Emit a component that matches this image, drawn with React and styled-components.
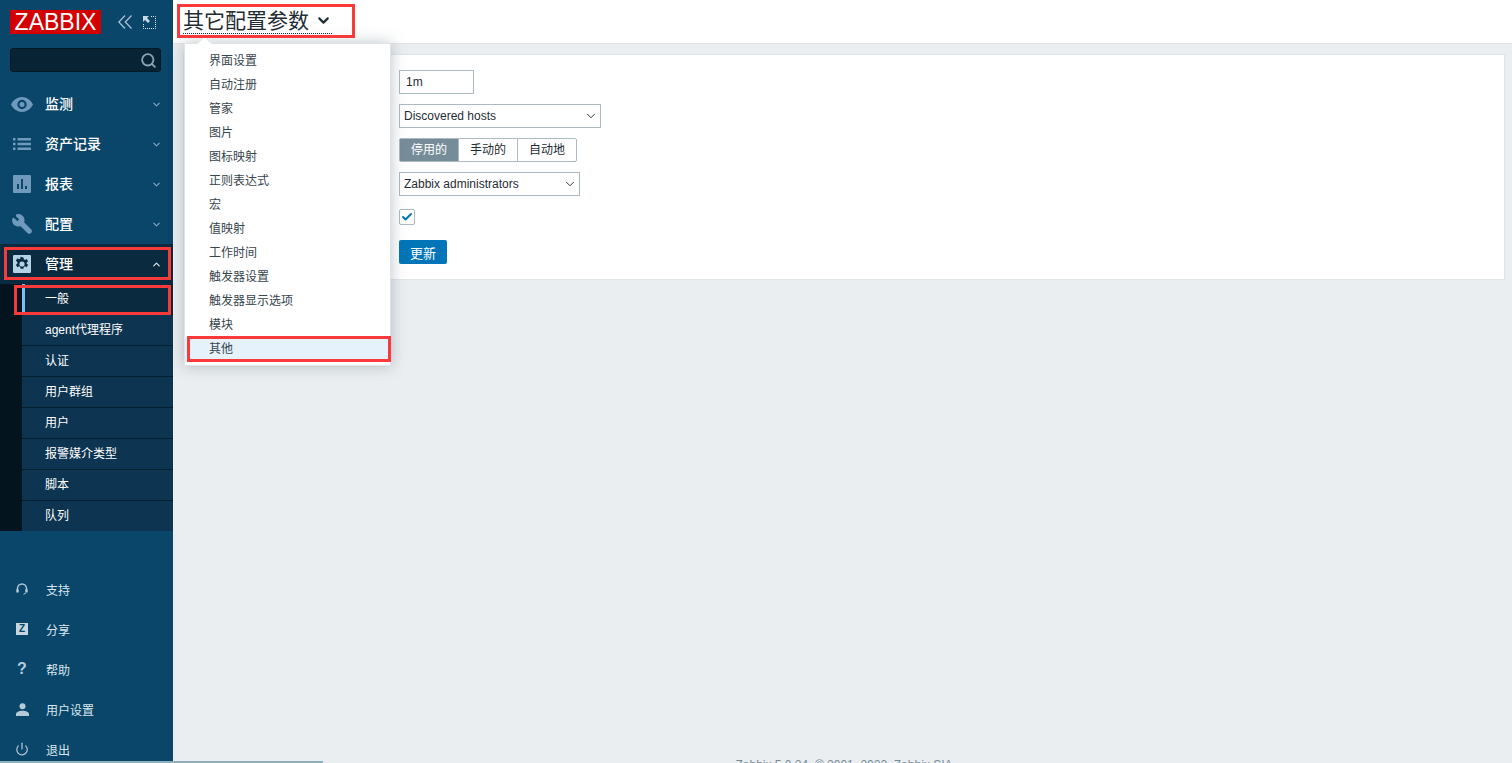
import React from "react";
import styled, { createGlobalStyle } from "styled-components";
import { ChevronDown, ChevronUp, Wrench, Search, Power, Check } from "lucide-react";

const GlobalStyle = createGlobalStyle`
  html, body {
    margin: 0;
    height: 763px;
    overflow: hidden;
    background: #ebeef0;
    font-family: Arial, "Liberation Sans", "Noto Sans CJK SC", sans-serif;
    font-size: 12px;
    color: #1f2c33;
  }
  * { box-sizing: border-box; }
`;

const Page = styled.div`
  display: flex;
  height: 763px;
  position: relative;
  overflow: hidden;
`;

const Sidebar = styled.aside`
  width: 173px;
  flex: none;
  height: 763px;
  background: #0a466a;
  display: flex;
  flex-direction: column;
  overflow: hidden;
  & > * {
    flex-shrink: 0;
  }
`;

const Brand = styled.div`
  display: flex;
  align-items: center;
  height: 24px;
  margin: 10px 0 14px 10px;
`;

const Logo = styled.div`
  width: 91px;
  height: 24px;
  background: #d40000;
  color: #fff;
  font-family: Arial, "Liberation Sans", sans-serif;
  font-size: 23px;
  line-height: 24px;
  text-align: center;
`;

const BrandTools = styled.div`
  display: flex;
  align-items: center;
  margin-left: 17px;
  gap: 11px;
  color: #a9c1d2;
`;

const SearchBox = styled.div`
  width: 151px;
  height: 24px;
  margin-left: 10px;
  background: #082434;
  border: 1px solid #041a27;
  border-radius: 3px;
  display: flex;
  align-items: center;
  justify-content: flex-end;
  padding-right: 3px;
  color: #8ba5b5;
`;

const Nav = styled.nav`
  margin-top: 12px;
`;

const NavRow = styled.div`
  height: 40px;
  display: flex;
  align-items: center;
  color: #fff;
  font-size: 14px;
  background: ${(p) => (p.$active ? "#0a2a3f" : "transparent")};
`;

const NavIcon = styled.span`
  width: 45px;
  flex: none;
  display: flex;
  justify-content: center;
  padding-right: 1px;
  color: ${(p) => (p.$active ? "#b5d1e6" : "#6f9abb")};
`;

const NavLabel = styled.span`
  flex: 1;
  font-weight: 500;
  padding-bottom: 2px;
`;

const NavCaret = styled.span`
  width: 34px;
  display: flex;
  justify-content: center;
  color: #86a7bf;
`;

const SubNav = styled.div`
  background: #03141f;
  padding-left: 22px;
`;

const SubRow = styled.div`
  height: ${(p) => (p.$last ? 30 : 31)}px;
  display: flex;
  align-items: center;
  padding: 0 0 3px 23px;
  color: #fff;
  font-size: 12px;
  background: ${(p) => (p.$active ? "#0a2a3f" : "#0d3450")};
  border-bottom: 1px solid ${(p) => (p.$last ? "#0d3450" : "#04202f")};
  position: relative;
`;

const SubMarker = styled.span`
  position: absolute;
  left: 0;
  top: 0;
  width: 3px;
  height: 29px;
  background: #7cc0f0;
`;

const Bottom = styled.div`
  margin-top: 38px;
`;

const BottomRow = styled.div`
  height: 40px;
  display: flex;
  align-items: center;
  color: #d9e6ee;
  font-size: 12px;
`;

const BottomIcon = styled.span`
  width: 46px;
  flex: none;
  padding-right: 2px;
  display: flex;
  justify-content: center;
  color: #b5cad8;
`;

const ZBadge = styled.span`
  width: 12px;
  height: 12px;
  background: #c5d6e1;
  color: #0a466a;
  font-size: 10px;
  font-weight: bold;
  line-height: 12px;
  text-align: center;
`;

const QMark = styled.span`
  font-size: 16px;
  font-weight: bold;
  line-height: 16px;
  color: #b5cad8;
`;

const MirroredWrench = styled(Wrench)`
  transform: scaleX(-1);
`;

const Main = styled.main`
  flex: 1;
  display: flex;
  flex-direction: column;
  position: relative;
`;

const Header = styled.header`
  height: 44px;
  background: #fff;
  border-bottom: 1px solid #dfe4e7;
  padding: 8px 0 0 10px;
`;

const Title = styled.span`
  display: inline-flex;
  align-items: center;
  height: 26px;
  font-size: 21px;
  line-height: 26px;
  color: #1f2c33;
  border-bottom: 1px dotted #1f2c33;
  gap: 6px;
`;

const Panel = styled.section`
  margin: 10px 7px 0 10px;
  height: 226px;
  background: #fff;
  border: 1px solid #dfe4e7;
  padding: 15px 0 0 215px;
  display: flex;
  flex-direction: column;
  align-items: flex-start;
`;

const TextInput = styled.div`
  width: 75px;
  height: 24px;
  border: 1px solid #acbbc2;
  padding-left: 6px;
  line-height: 22px;
  margin-bottom: 10px;
`;

const SelectBox = styled.div`
  width: ${(p) => p.$width}px;
  height: 24px;
  border: 1px solid #acbbc2;
  padding: 0 2px 0 ${(p) => p.$pad}px;
  margin-bottom: 10px;
  display: flex;
  align-items: center;
  justify-content: space-between;
  background: #fff;
`;

const Segments = styled.div`
  display: flex;
  height: 24px;
  margin-bottom: 10px;
`;

const Segment = styled.div`
  width: ${(p) => p.$width}px;
  border: 1px solid #acbbc2;
  margin-left: ${(p) => (p.$first ? 0 : -1)}px;
  background: ${(p) => (p.$on ? "#768d99" : "#fff")};
  color: ${(p) => (p.$on ? "#fff" : "#1f2c33")};
  border-radius: ${(p) => p.$radius};
  text-align: center;
  line-height: 22px;
`;

const CheckBox = styled.div`
  width: 16px;
  height: 16px;
  margin: 3px 0 15px;
  border: 1px solid #acbbc2;
  border-radius: 2px;
  display: flex;
  align-items: center;
  justify-content: center;
  color: #0275b8;
`;

const SubmitButton = styled.button`
  width: 48px;
  height: 24px;
  border: none;
  border-radius: 2px;
  background: #0275b8;
  color: #fff;
  font: inherit;
  font-size: 13px;
  padding: 0;
`;

const Footer = styled.footer`
  position: absolute;
  left: 0;
  right: 0;
  top: 758px;
  text-align: center;
  font-size: 12px;
  color: #768d99;
  padding-left: 3px;
`;

const ScrollHint = styled.div`
  position: absolute;
  left: 0;
  top: 761px;
  width: 323px;
  height: 2px;
  background: #8fb0b8;
`;

const Menu = styled.div`
  position: absolute;
  left: 11px;
  top: 43px;
  width: 207px;
  height: 323px;
  background: #fff;
  border: 1px solid #dfe4e7;
  box-shadow: 0 0 14px rgba(70, 90, 105, 0.35);
  padding: 5px 0;
  &::before {
    content: "";
    position: absolute;
    left: 14px;
    top: -6px;
    width: 10px;
    height: 10px;
    background: #fff;
    border-left: 1px solid #dfe4e7;
    border-top: 1px solid #dfe4e7;
    transform: rotate(45deg);
  }
`;

const MenuItem = styled.div`
  position: relative;
  height: 24px;
  line-height: 24px;
  padding-left: 24px;
  color: #37454d;
  background: ${(p) => (p.$on ? "#e5f2fb" : "transparent")};
`;

const Mark = styled.div`
  position: absolute;
  left: ${(p) => p.$x}px;
  top: ${(p) => p.$y}px;
  width: ${(p) => p.$w}px;
  height: ${(p) => p.$h}px;
  border: 3px solid #f93a3a;
  pointer-events: none;
`;

const EyeIcon = () => (
  <svg width="22" height="15" viewBox="0 0 22 15">
    <path
      fill="currentColor"
      fillRule="evenodd"
      d="M0 7.5C2.5 2.8 6.5 0 11 0s8.500 2.800 11 7.500C19.500 12.200 15.500 15 11 15S2.500 12.200 0 7.500zM11 2.800a4.700 4.700 0 1 0 0 9.400 4.700 4.700 0 0 0 0-9.400zm0 2.200a2.500 2.500 0 1 1 0 5 2.500 2.500 0 0 1 0-5z"
    />
  </svg>
);

const ListIcon = () => (
  <svg width="18" height="14" viewBox="0 0 18 14">
    <path
      fill="currentColor"
      d="M0 1h2.500v2.500H0zM4.500 1H18v2.500H4.500zM0 5.750h2.500v2.500H0zM4.500 5.750H18v2.500H4.500zM0 10.500h2.500V13H0zM4.500 10.500H18V13H4.500z"
    />
  </svg>
);

const ReportIcon = () => (
  <svg width="18" height="18" viewBox="0 0 18 18">
    <path
      fill="currentColor"
      fillRule="evenodd"
      d="M1 0h16a1 1 0 0 1 1 1v16a1 1 0 0 1-1 1H1a1 1 0 0 1-1-1V1a1 1 0 0 1 1-1zM4 9v5h2V9zm4-5v10h2V4zm4 7v3h2v-3z"
    />
  </svg>
);

const GearIcon = () => (
  <svg width="18" height="18" viewBox="0 0 18 18">
    <path
      fill="currentColor"
      fillRule="evenodd"
      d="M1 0h16a1 1 0 0 1 1 1v16a1 1 0 0 1-1 1H1a1 1 0 0 1-1-1V1a1 1 0 0 1 1-1zm6.560 1.800l-.36 1.920-1.200.6-1.680-.96-1.440 2.400 1.440 1.200v1.680l-1.440 1.200 1.440 2.400 1.680-.96 1.200.6.360 1.920h2.880l.36-1.920 1.200-.6 1.680.96 1.440-2.400-1.440-1.200V7.560l1.440-1.200-1.440-2.400-1.680.96-1.200-.6-.36-1.920zM9 6.400a2.600 2.600 0 1 1 0 5.200 2.600 2.600 0 0 1 0-5.200z"
    />
  </svg>
);

const CollapseIcon = () => (
  <svg width="14" height="14" viewBox="0 0 14 14" fill="none" stroke="currentColor" strokeWidth="1.300">
    <path d="M7 .5L.8 7 7 13.500M13.500 .5L7.300 7l6.200 6.500" />
  </svg>
);

const FullscreenIcon = () => (
  <svg width="13" height="13" viewBox="0 0 13 13" fill="none">
    <path d="M0 0h6L4 2l3 3-2 2-3-3-2 2z" fill="#c9d8e2" />
    <path d="M8 .5h4.500V12.500H.5V8" stroke="#e3edf3" strokeDasharray="1 1" />
  </svg>
);

const HeadsetIcon = () => (
  <svg width="12" height="12" viewBox="0 0 12 12" fill="none" stroke="currentColor">
    <path d="M1.500 8V5.500a4.500 4.500 0 0 1 9 0V8" strokeWidth="1.500" />
    <path d="M1.500 6.500v3M10.500 6.500v3" strokeWidth="2.400" />
    <path d="M10 10l-2.500 1.300" strokeWidth="1" />
  </svg>
);

const PersonIcon = () => (
  <svg width="13" height="13" viewBox="0 0 13 13">
    <circle cx="6.500" cy="3.200" r="3" fill="currentColor" />
    <path fill="currentColor" d="M0 13v-2c0-2 3-3.300 6.500-3.300S13 9 13 11v2z" />
  </svg>
);

const navItems = [
  { label: "监测", icon: <EyeIcon /> },
  { label: "资产记录", icon: <ListIcon /> },
  { label: "报表", icon: <ReportIcon /> },
  { label: "配置", icon: <MirroredWrench size={22} fill="currentColor" strokeWidth={1.5} /> },
];

const subItems = ["一般", "agent代理程序", "认证", "用户群组", "用户", "报警媒介类型", "脚本", "队列"];

const menuItems = ["界面设置", "自动注册", "管家", "图片", "图标映射", "正则表达式", "宏", "值映射", "工作时间", "触发器设置", "触发器显示选项", "模块", "其他"];

export default function App() {
  return (
    <Page>
      <GlobalStyle />
      <Sidebar>
        <Brand>
          <Logo>ZABBIX</Logo>
          <BrandTools>
            <CollapseIcon />
            <FullscreenIcon />
          </BrandTools>
        </Brand>
        <SearchBox>
          <Search size={17} strokeWidth={2.6} />
        </SearchBox>
        <Nav>
          {navItems.map((item) => (
            <NavRow key={item.label}>
              <NavIcon>{item.icon}</NavIcon>
              <NavLabel>{item.label}</NavLabel>
              <NavCaret>
                <ChevronDown size={11} strokeWidth={2.4} />
              </NavCaret>
            </NavRow>
          ))}
          <NavRow $active>
            <NavIcon $active>
              <GearIcon />
            </NavIcon>
            <NavLabel>管理</NavLabel>
            <NavCaret>
              <ChevronUp size={11} strokeWidth={2.6} color="#dfe9f0" />
            </NavCaret>
          </NavRow>
          <SubNav>
            {subItems.map((label, i) => (
              <SubRow key={label} $active={i === 0} $last={i === subItems.length - 1}>
                {i === 0 && <SubMarker />}
                {label}
              </SubRow>
            ))}
          </SubNav>
        </Nav>
        <Bottom>
          <BottomRow>
            <BottomIcon>
              <HeadsetIcon />
            </BottomIcon>
            支持
          </BottomRow>
          <BottomRow>
            <BottomIcon>
              <ZBadge>Z</ZBadge>
            </BottomIcon>
            分享
          </BottomRow>
          <BottomRow>
            <BottomIcon>
              <QMark>?</QMark>
            </BottomIcon>
            帮助
          </BottomRow>
          <BottomRow>
            <BottomIcon>
              <PersonIcon />
            </BottomIcon>
            用户设置
          </BottomRow>
          <BottomRow>
            <BottomIcon>
              <Power size={14} strokeWidth={2} />
            </BottomIcon>
            退出
          </BottomRow>
        </Bottom>
      </Sidebar>
      <Main>
        <Header>
          <Title>
            其它配置参数
            <ChevronDown size={17} strokeWidth={3} />
          </Title>
        </Header>
        <Panel>
          <TextInput>1m</TextInput>
          <SelectBox $width={202} $pad={4}>
            Discovered hosts
            <ChevronDown size={14} strokeWidth={1.6} />
          </SelectBox>
          <Segments>
            <Segment $first $on $width={60} $radius="2px 0 0 2px">停用的</Segment>
            <Segment $width={60} $radius="0">手动的</Segment>
            <Segment $width={60} $radius="0 2px 2px 0">自动地</Segment>
          </Segments>
          <SelectBox $width={181} $pad={4}>
            Zabbix administrators
            <ChevronDown size={14} strokeWidth={1.6} />
          </SelectBox>
          <CheckBox>
            <Check size={12} strokeWidth={4} />
          </CheckBox>
          <SubmitButton>更新</SubmitButton>
        </Panel>
        <Menu>
          {menuItems.map((label, i) => (
            <MenuItem key={label} $on={i === menuItems.length - 1}>
              {label}
            </MenuItem>
          ))}
        </Menu>
        <Footer>Zabbix 5.0.24. © 2001–2022, Zabbix SIA</Footer>
      </Main>
      <ScrollHint />
      <Mark $x={4} $y={247} $w={167} $h={33} />
      <Mark $x={14} $y={285} $w={157} $h={30} />
      <Mark $x={177} $y={4} $w={178} $h={34} />
      <Mark $x={187} $y={336} $w={204} $h={26} />
    </Page>
  );
}
